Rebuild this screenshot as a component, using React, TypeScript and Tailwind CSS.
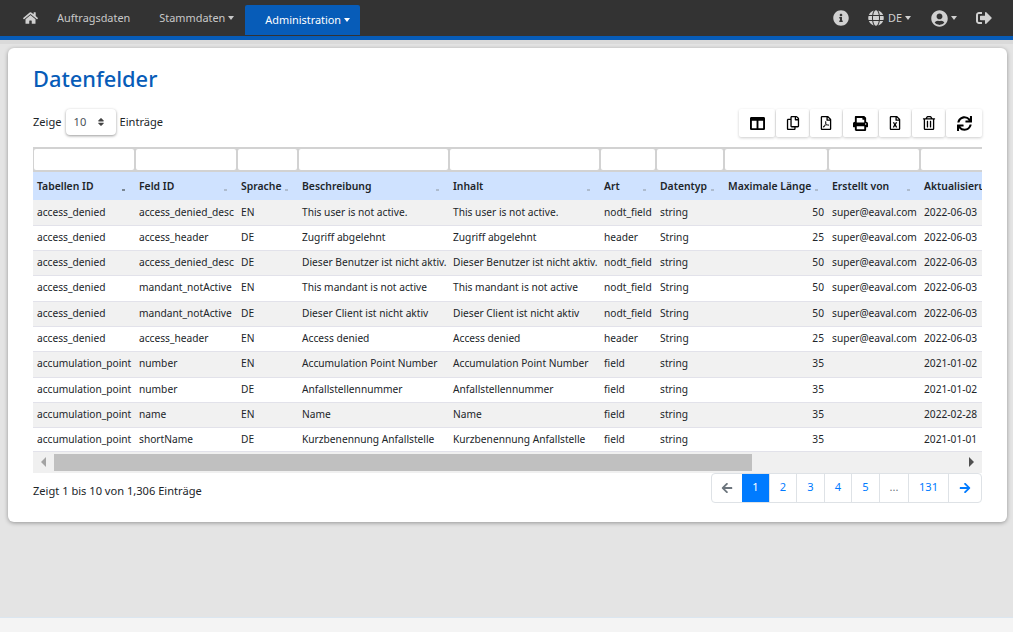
import React from 'react';
import {
  FaHome, FaInfoCircle, FaGlobe, FaUserCircle, FaSignOutAlt, FaColumns, FaRegCopy, FaRegFilePdf,
  FaPrint, FaRegFileExcel, FaRegTrashAlt, FaSync, FaArrowLeft, FaArrowRight, FaSort,
} from 'react-icons/fa';

const columns = [
  { label: 'Tabellen ID', w: 'w-[102px]' },
  { label: 'Feld ID', w: 'w-[102px]' },
  { label: 'Sprache', w: 'w-[61px]' },
  { label: 'Beschreibung', w: 'w-[151px]' },
  { label: 'Inhalt', w: 'w-[151px]' },
  { label: 'Art', w: 'w-[56px]' },
  { label: 'Datentyp', w: 'w-[68px]' },
  { label: 'Maximale Länge', w: 'w-[104px]' },
  { label: 'Erstellt von', w: 'w-[92px]' },
  { label: 'Aktualisierung', w: 'w-[110px]' },
];

const rows = [
  ['access_denied', 'access_denied_desc', 'EN', 'This user is not active.', 'This user is not active.', 'nodt_field', 'string', '50', 'super@eaval.com', '2022-06-03'],
  ['access_denied', 'access_header', 'DE', 'Zugriff abgelehnt', 'Zugriff abgelehnt', 'header', 'String', '25', 'super@eaval.com', '2022-06-03'],
  ['access_denied', 'access_denied_desc', 'DE', 'Dieser Benutzer ist nicht aktiv.', 'Dieser Benutzer ist nicht aktiv.', 'nodt_field', 'string', '50', 'super@eaval.com', '2022-06-03'],
  ['access_denied', 'mandant_notActive', 'EN', 'This mandant is not active', 'This mandant is not active', 'nodt_field', 'String', '50', 'super@eaval.com', '2022-06-03'],
  ['access_denied', 'mandant_notActive', 'DE', 'Dieser Client ist nicht aktiv', 'Dieser Client ist nicht aktiv', 'nodt_field', 'String', '50', 'super@eaval.com', '2022-06-03'],
  ['access_denied', 'access_header', 'EN', 'Access denied', 'Access denied', 'header', 'String', '25', 'super@eaval.com', '2022-06-03'],
  ['accumulation_point', 'number', 'EN', 'Accumulation Point Number', 'Accumulation Point Number', 'field', 'string', '35', '', '2021-01-02'],
  ['accumulation_point', 'number', 'DE', 'Anfallstellennummer', 'Anfallstellennummer', 'field', 'string', '35', '', '2021-01-02'],
  ['accumulation_point', 'name', 'EN', 'Name', 'Name', 'field', 'string', '35', '', '2022-02-28'],
  ['accumulation_point', 'shortName', 'DE', 'Kurzbenennung Anfallstelle', 'Kurzbenennung Anfallstelle', 'field', 'string', '35', '', '2021-01-01'],
];

const tools = [
  { icon: FaColumns, w: 'w-[36px]', size: 'w-[15px] h-[15px]' },
  { icon: FaRegCopy, w: 'w-[33px]', size: 'w-[14px] h-[14px]' },
  { icon: FaRegFilePdf, w: 'w-[32px]', size: 'w-[14px] h-[14px]' },
  { icon: FaPrint, w: 'w-[35px]', size: 'w-[15px] h-[15px]' },
  { icon: FaRegFileExcel, w: 'w-[32px]', size: 'w-[14px] h-[14px]' },
  { icon: FaRegTrashAlt, w: 'w-[33px]', size: 'w-[14px] h-[14px]' },
  { icon: FaSync, w: 'w-[36px]', size: 'w-[15px] h-[15px]' },
];

const pages = [
  { label: '1', w: 'w-[28px]', cls: 'bg-[#007bff] text-white' },
  { label: '2', w: 'w-[27px]', cls: 'text-[#007bff]' },
  { label: '3', w: 'w-[28px]', cls: 'text-[#007bff]' },
  { label: '4', w: 'w-[27px]', cls: 'text-[#007bff]' },
  { label: '5', w: 'w-[28px]', cls: 'text-[#007bff]' },
  { label: '...', w: 'w-[29px]', cls: 'text-[#6c757d]' },
  { label: '131', w: 'w-[40px]', cls: 'text-[#007bff]' },
];

const rowHeight = (i: number) => {
  if (i === 3 || i === 6) return 'h-[26px]';
  if (i === 9) return 'h-[24px]';
  return 'h-[25px]';
};

export default function App() {
  return (
    <div className="min-h-[632px] bg-[#e4e4e4] font-['Noto_Sans',sans-serif] text-[#212529] flex flex-col">
      <nav className="h-[40px] bg-[#333333] border-b-[4px] border-[#075cb8] flex items-end pl-[23px] pr-[21px] text-[10.9px] text-[#c8c8c8] shrink-0">
        <div className="h-[36px] flex items-center">
          <FaHome className="w-[15px] h-[14px] text-[#d0d0d0]" />
          <span className="ml-[19px]">Auftragsdaten</span>
          <span className="ml-[29px]">Stammdaten</span>
          <Caret />
        </div>
        <div className="ml-[11px] h-[30px] w-[115px] mb-[1px] bg-[#075cb8] rounded-t-[2px] text-white flex items-center pl-[20px]">
          <span>Administration</span>
          <Caret />
        </div>
        <div className="ml-auto h-[36px] flex items-center text-[#d0d0d0]">
          <FaInfoCircle className="w-[16px] h-[16px]" />
          <FaGlobe className="ml-[19px] w-[16px] h-[16px]" />
          <span className="ml-[4px]">DE</span>
          <Caret />
          <FaUserCircle className="ml-[20px] w-[17px] h-[17px]" />
          <Caret />
          <FaSignOutAlt className="ml-[19px] w-[16px] h-[16px]" />
        </div>
      </nav>

      <div className="h-[4px] bg-[#dadada] shrink-0" />

      <main className="ml-[8px] mr-[6px] mt-[4px] h-[474px] bg-white rounded-[6px] shadow-[0_1px_4px_rgba(0,0,0,0.35)] px-[25px] shrink-0">
        <h1 className="pt-[16px] text-[21.8px] leading-[30px] font-medium text-[#075cb8]">Datenfelder</h1>

        <div className="mt-[15px] flex items-start justify-between">
          <div className="flex items-center text-[11.1px] h-[26px]">
            <span>Zeige</span>
            <div className="ml-[4px] w-[50px] h-[26px] rounded-[4px] bg-white shadow-[0_1px_3px_rgba(0,0,0,0.4)] flex items-center justify-between pl-[8px] pr-[11px] text-[#495057]">
              <span>10</span>
              <FaSort className="w-[8px] h-[10px] text-[#444444]" />
            </div>
            <span className="ml-[4px]">Einträge</span>
          </div>
          <div className="flex gap-[1px]">
            {tools.map(({ icon: Icon, w, size }, i) => (
              <div key={i} className={`${w} h-[28px] flex items-center justify-center bg-white text-black rounded-[2px] shadow-[0_1px_3px_rgba(0,0,0,0.2)]`}>
                <Icon className={size} />
              </div>
            ))}
          </div>
        </div>

        <div className="mt-[10px] w-[949px] overflow-hidden">
          <table className="table-fixed border-collapse w-[997px] text-[10.2px]">
            <colgroup>
              {columns.map(c => <col key={c.label} className={c.w} />)}
            </colgroup>
            <thead>
              <tr className="h-[25px] bg-[#d2d2d2]">
                {columns.map(c => (
                  <td key={c.label} className="p-0 px-[1px]">
                    <div className="h-[21px] bg-white rounded-[2px]" />
                  </td>
                ))}
              </tr>
              <tr className="h-[28px] bg-[#cfe2ff]">
                {columns.map((c, i) => (
                  <th key={c.label} className="relative p-0 pl-[4px] pt-[1px] text-left text-[10.4px] font-semibold whitespace-nowrap overflow-hidden">
                    {c.label}
                    <span className={`absolute right-[10px] bottom-[9px] w-[3px] h-[2px] ${i === 0 ? 'bg-[#7b8794]' : 'bg-[#aebccf]'}`} />
                  </th>
                ))}
              </tr>
            </thead>
            <tbody>
              {rows.map((r, i) => (
                <tr key={i} className={`${rowHeight(i)} border-b border-[#e2e2ea] ${i % 2 === 0 ? 'bg-[#f1f1f1]' : 'bg-white'}`}>
                  {r.map((cell, j) => (
                    <td key={j} className={`p-0 px-[4px] whitespace-nowrap overflow-hidden ${j === 7 ? 'text-right' : ''} ${i === 9 ? 'pt-[1px]' : ''}`}>{cell}</td>
                  ))}
                </tr>
              ))}
            </tbody>
          </table>
          <div className="h-[21px] bg-[#f0f0f0] flex items-center">
            <div className="w-[21px] flex justify-center">
              <span className="w-0 h-0 border-y-[5px] border-y-transparent border-r-[5px] border-r-[#a3a3a3]" />
            </div>
            <div className="w-[698px] h-[17px] bg-[#c0c0c0]" />
            <div className="ml-auto w-[21px] flex justify-center">
              <span className="w-0 h-0 border-y-[5px] border-y-transparent border-l-[5px] border-l-[#505050]" />
            </div>
          </div>
        </div>

        <div className="w-[949px] flex items-start justify-between">
          <span className="mt-[10px] text-[11.1px]">Zeigt 1 bis 10 von 1,306 Einträge</span>
          <div className="flex h-[30px] border border-[#dee2e6] rounded-[4px] text-[11.1px] overflow-hidden">
            <div className="w-[30px] flex items-center justify-center text-[#6c757d]">
              <FaArrowLeft className="w-[12px] h-[12px]" />
            </div>
            {pages.map(p => (
              <div key={p.label} className={`${p.w} ${p.cls} flex items-center justify-center border-r border-[#dee2e6]`}>{p.label}</div>
            ))}
            <div className="w-[32px] flex items-center justify-center text-[#007bff]">
              <FaArrowRight className="w-[12px] h-[12px]" />
            </div>
          </div>
        </div>
      </main>

      <div className="mt-auto h-[15px] bg-[#f4f4f4] border-t border-[#dbe6f0]" />
    </div>
  );
}

function Caret() {
  return <span className="ml-[3px] w-0 h-0 border-x-[3.5px] border-x-transparent border-t-[4px] border-t-current" />;
}
